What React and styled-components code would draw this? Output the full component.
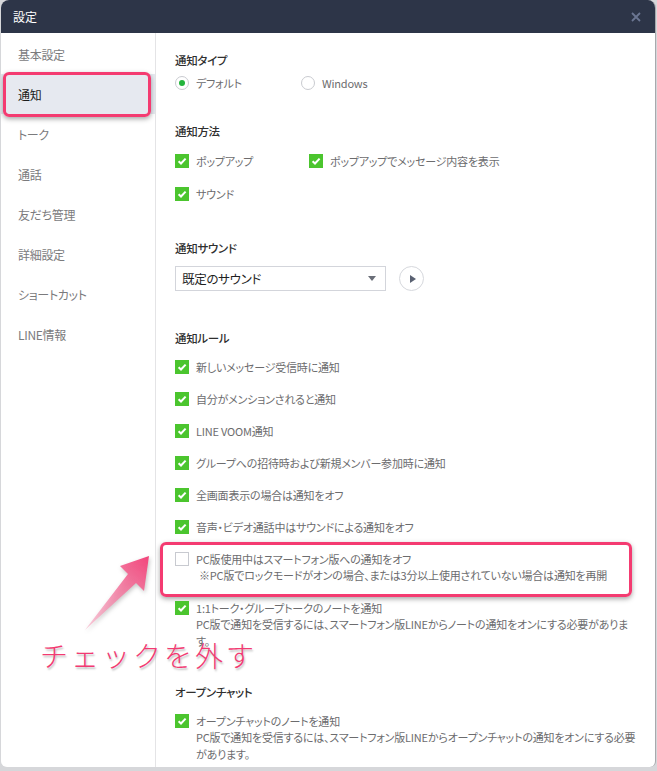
import React from 'react';
import styled, { createGlobalStyle } from 'styled-components';

const GlobalStyle = createGlobalStyle`
  html, body {
    margin: 0;
    padding: 0;
    background: #d6d7da;
  }
  body {
    font-family: "Noto Sans CJK JP", "Noto Sans", sans-serif;
    font-feature-settings: "palt";
  }
`;

const Window = styled.div`
  position: relative;
  width: 654px;
  height: 767px;
  margin-left: 1px;
  background: #fff;
  border-radius: 8px 8px 6px 6px;
  border-right: 1px solid #a7a9ad;
  overflow: hidden;
  display: flex;
  flex-direction: column;
`;

const TitleBar = styled.div`
  height: 33px;
  flex-shrink: 0;
  background: #2d3548;
  color: #fff;
  display: flex;
  align-items: center;
  justify-content: space-between;
  padding: 0 12px 0 12px;
  font-size: 12px;
`;

const CloseButton = styled.svg`
  width: 10px;
  height: 10px;
  margin-right: 2px;
`;

const Body = styled.div`
  flex: 1;
  display: flex;
  min-height: 0;
`;

const Sidebar = styled.nav`
  width: 154px;
  flex-shrink: 0;
  border-right: 1px solid #e4e4e6;
  padding-top: 1px;
`;

const NavItem = styled.div`
  position: relative;
  height: 40px;
  display: flex;
  align-items: center;
  padding-left: 17px;
  font-size: 12px;
  letter-spacing: -0.3px;
  color: ${(p) => (p.$active ? '#1c1c1c' : '#7b7b7d')};
  background: ${(p) => (p.$active ? '#e6e9f0' : 'transparent')};

  ${(p) =>
    p.$marked &&
    `
    &::after {
      content: '';
      position: absolute;
      left: 2px;
      right: 4px;
      top: -2px;
      bottom: -3px;
      border: 3px solid #f43b71;
      border-radius: 6px;
      box-shadow: 0 2px 5px rgba(0, 0, 0, 0.35);
      pointer-events: none;
    }
  `}
`;

const Content = styled.main`
  flex: 1;
  padding: 17px 23px 0 19px;
  overflow: hidden;
`;

const SectionTitle = styled.div`
  margin-top: ${(p) => p.$mt || 0}px;
  font-size: 11.5px;
  line-height: 20px;
  letter-spacing: -0.3px;
  font-weight: 500;
  color: #2f2f2f;
`;

const RadioGroup = styled.div`
  margin-top: 1px;
  height: 24px;
  display: grid;
  grid-template-columns: 126px auto;
  align-items: center;
`;

const RadioOption = styled.label`
  display: flex;
  align-items: center;
  gap: 7px;
  font-size: 11px;
  letter-spacing: -0.2px;
  color: #6c6c6e;
`;

const RadioCircle = styled.span`
  width: 12px;
  height: 12px;
  border-radius: 50%;
  border: 1px solid #c9cbd0;
  display: flex;
  align-items: center;
  justify-content: center;

  &::after {
    content: '';
    width: 6px;
    height: 6px;
    border-radius: 50%;
    background: ${(p) => (p.$on ? '#23b43c' : 'transparent')};
  }
`;

const MethodGrid = styled.div`
  margin-top: 3px;
  display: grid;
  grid-template-columns: 134px auto;
  grid-auto-rows: 33px;
  align-items: center;
`;

const RuleList = styled.div`
  margin-top: 3px;
`;

const Row = styled.div`
  position: relative;
  display: flex;
  align-items: flex-start;
  gap: 7px;
  padding: ${(p) => (p.$inline ? '0' : '8px 0')};

  ${(p) =>
    p.$marked &&
    `
    &::before {
      content: '';
      position: absolute;
      left: -15px;
      right: 0;
      top: -1px;
      bottom: -5px;
      border: 3px solid #f43b71;
      border-radius: 6px;
      box-shadow: 0 2px 5px rgba(0, 0, 0, 0.35);
      pointer-events: none;
    }
  `}
`;

const Box = styled.span`
  width: 14px;
  height: 14px;
  margin-top: 1px;
  flex-shrink: 0;
  box-sizing: border-box;
  background: ${(p) => (p.$on ? '#4bc52e' : '#fff')};
  border: ${(p) => (p.$on ? 'none' : '1px solid #c8cad0')};
  display: flex;
  align-items: center;
  justify-content: center;
`;

const TextBlock = styled.div`
  display: flex;
  flex-direction: column;
`;

const Label = styled.span`
  font-size: 11px;
  line-height: 16px;
  letter-spacing: -0.2px;
  color: #6c6c6e;
  white-space: nowrap;
`;

const Sub = styled.span`
  font-size: 11px;
  line-height: 17px;
  letter-spacing: -0.2px;
  color: #6c6c6e;
  white-space: nowrap;
  padding-left: ${(p) => p.$indent || 0}px;
`;

const SoundRow = styled.div`
  margin-top: 8px;
  display: flex;
  align-items: center;
  gap: 13px;
`;

const Select = styled.div`
  width: 211px;
  height: 25px;
  box-sizing: border-box;
  border: 1px solid #d3d5db;
  padding: 0 9px 0 6px;
  display: flex;
  align-items: center;
  justify-content: space-between;
  font-size: 12.5px;
  letter-spacing: -0.3px;
  color: #1f1f1f;
`;

const Caret = styled.span`
  width: 0;
  height: 0;
  border-left: 4px solid transparent;
  border-right: 4px solid transparent;
  border-top: 5px solid #6a6e78;
`;

const PlayButton = styled.span`
  width: 25px;
  height: 25px;
  box-sizing: border-box;
  border-radius: 50%;
  border: 1px solid #d6d8dd;
  display: flex;
  align-items: center;
  justify-content: center;

  &::after {
    content: '';
    margin-left: 2px;
    border-top: 4px solid transparent;
    border-bottom: 4px solid transparent;
    border-left: 6px solid #5a6172;
  }
`;

const Arrow = styled.svg`
  position: absolute;
  left: 70px;
  top: 540px;
  width: 90px;
  height: 100px;
  filter: drop-shadow(1px 2px 2px rgba(0, 0, 0, 0.25));
  pointer-events: none;
`;

const Callout = styled.div`
  position: absolute;
  left: 39px;
  top: 637px;
  font-size: 28px;
  line-height: 36px;
  letter-spacing: 3px;
  font-weight: 300;
  font-feature-settings: normal;
  color: #f23a72;
  text-shadow: 1px 2px 2px rgba(0, 0, 0, 0.25);
  pointer-events: none;
`;

const Check = () => (
  <svg width="10" height="10" viewBox="0 0 10 10">
    <path d="M1.6 5.2 L4 7.5 L8.6 2.6" fill="none" stroke="#fff" strokeWidth="2" />
  </svg>
);

const CheckRow = ({ on = true, label, sub = [], marked, inline }) => (
  <Row $marked={marked} $inline={inline}>
    <Box $on={on}>{on && <Check />}</Box>
    <TextBlock>
      <Label>{label}</Label>
      {sub.map((s, i) => (
        <Sub key={i} $indent={s.startsWith('※') ? 3 : 0}>{s}</Sub>
      ))}
    </TextBlock>
  </Row>
);

const navItems = ['基本設定', '通知', 'トーク', '通話', '友だち管理', '詳細設定', 'ショートカット', 'LINE情報'];

const rules = [
  '新しいメッセージ受信時に通知',
  '自分がメンションされると通知',
  'LINE VOOM通知',
  'グループへの招待時および新規メンバー参加時に通知',
  '全画面表示の場合は通知をオフ',
  '音声・ビデオ通話中はサウンドによる通知をオフ',
];

export default function App() {
  return (
    <>
      <GlobalStyle />
      <Window>
        <TitleBar>
          <span>設定</span>
          <CloseButton viewBox="0 0 10 10">
            <path d="M1 1 L9 9 M9 1 L1 9" stroke="#6b7692" strokeWidth="1.8" />
          </CloseButton>
        </TitleBar>
        <Body>
          <Sidebar>
            {navItems.map((n) => (
              <NavItem key={n} $active={n === '通知'} $marked={n === '通知'}>
                {n}
              </NavItem>
            ))}
          </Sidebar>
          <Content>
            <SectionTitle>通知タイプ</SectionTitle>
            <RadioGroup>
              <RadioOption>
                <RadioCircle $on />
                デフォルト
              </RadioOption>
              <RadioOption>
                <RadioCircle />
                Windows
              </RadioOption>
            </RadioGroup>

            <SectionTitle $mt={26}>通知方法</SectionTitle>
            <MethodGrid>
              <CheckRow inline label="ポップアップ" />
              <CheckRow inline label="ポップアップでメッセージ内容を表示" />
              <CheckRow inline label="サウンド" />
            </MethodGrid>

            <SectionTitle $mt={28}>通知サウンド</SectionTitle>
            <SoundRow>
              <Select>
                <span>既定のサウンド</span>
                <Caret />
              </Select>
              <PlayButton />
            </SoundRow>

            <SectionTitle $mt={37}>通知ルール</SectionTitle>
            <RuleList>
              {rules.map((r) => (
                <CheckRow key={r} label={r} />
              ))}
              <CheckRow
                on={false}
                marked
                label="PC版使用中はスマートフォン版への通知をオフ"
                sub={['※PC版でロックモードがオンの場合、または3分以上使用されていない場合は通知を再開']}
              />
              <CheckRow
                label="1:1トーク・グループトークのノートを通知"
                sub={['PC版で通知を受信するには、スマートフォン版LINEからノートの通知をオンにする必要がありま', 'す。']}
              />
            </RuleList>

            <SectionTitle $mt={24}>オープンチャット</SectionTitle>
            <RuleList>
              <CheckRow
                label="オープンチャットのノートを通知"
                sub={['PC版で通知を受信するには、スマートフォン版LINEからオープンチャットの通知をオンにする必要', 'があります。']}
              />
            </RuleList>
          </Content>
        </Body>

        <Arrow viewBox="70 540 90 100">
          <defs>
            <linearGradient id="arrowFill" x1="84" y1="630" x2="148" y2="556" gradientUnits="userSpaceOnUse">
              <stop offset="0" stopColor="#f7b6cb" stopOpacity="0.7" />
              <stop offset="1" stopColor="#f2437a" />
            </linearGradient>
          </defs>
          <polygon
            points="84,630 127,574 119,566 148,556 143,591 135,583"
            fill="url(#arrowFill)"
          />
        </Arrow>
        <Callout>チェックを外す</Callout>
      </Window>
    </>
  );
}
